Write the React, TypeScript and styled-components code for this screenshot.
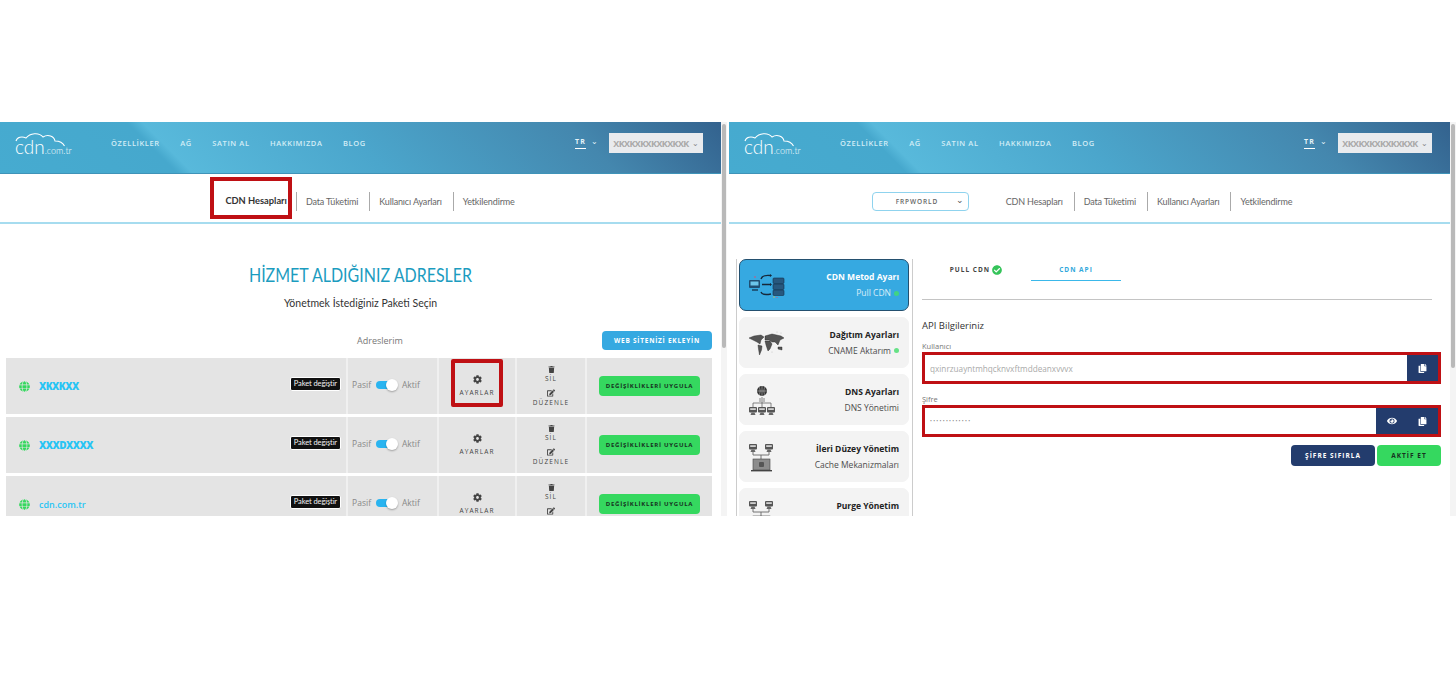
import React from 'react';
import styled, { createGlobalStyle } from 'styled-components';
import { FaCheckCircle, FaCog, FaCopy, FaEdit, FaEye, FaGlobe, FaTrash } from 'react-icons/fa';

const BLUE = '#36a9e1';
const GREEN = '#35d85f';
const NAVY = '#233c6d';
const RED = '#bf1014';
const CELL = '#e4e4e4';

const GlobalStyle = createGlobalStyle`
  html, body {
    margin: 0;
    background: #fff;
    font-family: "Open Sans", "Liberation Sans", sans-serif;
    color: #333;
  }
  * { box-sizing: border-box; }
`;

const navLinks = ['ÖZELLİKLER', 'AĞ', 'SATIN AL', 'HAKKIMIZDA', 'BLOG'];

const Logo = () => (
  <LogoWrap>
    <CloudSvg viewBox="0 0 50 14" fill="none" stroke="#fff" strokeWidth="1.1">
      <path d="M1 8 C2 4 7 3 11 5 C15 0 24 -1 28 4 C33 1 39 3 40 8 C44 8 48 10 49.5 13" />
    </CloudSvg>
    <LogoCdn>cdn</LogoCdn>
    <LogoTld>.com.tr</LogoTld>
  </LogoWrap>
);

const Header = ({ user }: { user: string }) => (
  <HeaderBar>
    <Logo />
    <NavList>
      {navLinks.map((link) => <NavLink key={link}>{link}</NavLink>)}
    </NavList>
    <LangSwitch>
      <LangCode>TR</LangCode>
      <Caret>⌄</Caret>
    </LangSwitch>
    <UserButton>
      <UserName>{user}</UserName>
      <Caret>⌄</Caret>
    </UserButton>
  </HeaderBar>
);

const tabs = ['CDN Hesapları', 'Data Tüketimi', 'Kullanıcı Ayarları', 'Yetkilendirme'];

const Tabs = ({ marked }: { marked?: boolean }) => (
  <TabList>
    {tabs.map((tab, i) => (
      <TabItem key={tab} $first={i === 0} $marked={marked && i === 0}>{tab}</TabItem>
    ))}
  </TabList>
);

const rows = [
  { name: 'XKXKXX', masked: true, marked: true },
  { name: 'XXXDXXXX', masked: true },
  { name: 'cdn.com.tr', masked: false },
];

const SiteRow = ({ name, masked, marked }: { name: string; masked: boolean; marked?: boolean }) => (
  <Row>
    <MainCell>
      <GlobeIcon />
      <SiteName $masked={masked}>{name}</SiteName>
      <PlanBadge>Paket değiştir</PlanBadge>
    </MainCell>
    <ToggleCell>
      <ToggleLabel>Pasif</ToggleLabel>
      <Toggle><ToggleKnob /></Toggle>
      <ToggleLabel>Aktif</ToggleLabel>
    </ToggleCell>
    <SettingsCell>
      <SettingsBox $marked={marked}>
        <FaCog size={9} color="#444" />
        <CellCaption>AYARLAR</CellCaption>
      </SettingsBox>
    </SettingsCell>
    <ActionsCell>
      <FaTrash size={7} color="#444" />
      <CellCaption>SİL</CellCaption>
      <ActionGap />
      <FaEdit size={8} color="#444" />
      <CellCaption>DÜZENLE</CellCaption>
    </ActionsCell>
    <ApplyCell>
      <ApplyButton>DEĞİŞİKLİKLERİ UYGULA</ApplyButton>
    </ApplyCell>
  </Row>
);

const Monitor = ({ x, y }: { x: number; y: number }) => (
  <g>
    <rect x={x} y={y} width="8" height="5.5" rx="1" fill="#555" />
    <rect x={x + 1.2} y={y + 1.2} width="5.6" height="1.8" fill="#cfcfcf" />
    <path d={`M${x + 2.5} ${y + 5.5} h3 l1 2.5 h-5 z`} fill="#666" />
  </g>
);

const MethodArt = () => (
  <ArtSvg viewBox="0 0 38 26" fill="none">
    <rect x="1" y="8" width="11" height="8" rx="1" fill="#1f4f73" />
    <rect x="2.5" y="9.5" width="8" height="4" fill="#6cc6ea" />
    <path d="M4 18 h6" stroke="#173a55" strokeWidth="1.4" />
    <rect x="25" y="6" width="11" height="5.5" rx="1" fill="#27587e" stroke="#143049" strokeWidth=".6" />
    <rect x="25" y="12" width="11" height="5.5" rx="1" fill="#27587e" stroke="#143049" strokeWidth=".6" />
    <rect x="25" y="18" width="11" height="5.5" rx="1" fill="#27587e" stroke="#143049" strokeWidth=".6" />
    <path d="M13 7 C14 4 17 3 22 3.5 M14 12.5 H23 M13 20 C14 23 18 23 23 22" stroke="#17283a" strokeWidth="1.4" />
    <path d="M22 2 l2 1.5 -2 1.5 z M22 11 l2 1.5 -2 1.5 z" fill="#17283a" />
    <circle cx="7" cy="5" r=".8" fill="#e6476f" />
    <circle cx="29" cy="26" r=".8" fill="#e6476f" />
    <circle cx="26" cy="25" r=".7" fill="#e6c347" />
  </ArtSvg>
);

const WorldArt = () => (
  <ArtSvg viewBox="0 0 38 26" fill="#555" stroke="#222" strokeWidth=".4">
    <path d="M1 8 L6 6 L13 5 L16 7 L13 10 L12 14 L9 12 L5 10 Z" />
    <path d="M10 15 L14 16 L13.5 20 L11.5 25 L10.5 19 Z" />
    <path d="M17 6 L24 4 L33 6 L36 8 L32 10 L30 15 L27 12 L24 12 L21 10 L17 10 Z" />
    <path d="M17 11 L22 11 L24 14 L22 19 L20 21 L18 15 Z" />
    <path d="M30 17 L34 17 L34 20 L30 19 Z" />
    <circle cx="29" cy="2" r=".5" fill="#bbb" stroke="none" />
    <circle cx="33" cy="3" r=".5" fill="#bbb" stroke="none" />
    <circle cx="24" cy="22" r=".5" fill="#bbb" stroke="none" />
  </ArtSvg>
);

const DnsArt = () => (
  <ArtSvg viewBox="0 0 38 32" fill="none">
    <circle cx="14" cy="7" r="5" fill="#333" />
    <path d="M9 7 H19 M14 2 V12 M11 3 C12.5 5 12.5 9 11 11 M17 3 C15.5 5 15.5 9 17 11" stroke="#ccc" strokeWidth=".5" />
    <path d="M14 13 V23 M5 23 V19 H23 V23 M12 14 V18 M16 14 V18" stroke="#666" strokeWidth=".8" />
    <Monitor x={1} y={23} />
    <Monitor x={10} y={23} />
    <Monitor x={19} y={23} />
  </ArtSvg>
);

const AdvancedArt = () => (
  <ArtSvg viewBox="0 0 38 32" fill="none">
    <Monitor x={1} y={3} />
    <Monitor x={17} y={3} />
    <path d="M5 11 V14 H21 V11 M13 14 V18" stroke="#666" strokeWidth=".9" />
    <rect x="5" y="18" width="17" height="11" fill="#8c8c8c" stroke="#444" strokeWidth=".6" />
    <rect x="3" y="29" width="21" height="1.4" fill="#444" />
    <rect x="11" y="21" width="5" height="5" rx="1" fill="#555" />
  </ArtSvg>
);

const menu = [
  { title: 'CDN Metod Ayarı', sub: 'Pull CDN', dot: true, active: true, art: <MethodArt /> },
  { title: 'Dağıtım Ayarları', sub: 'CNAME Aktarım', dot: true, art: <WorldArt /> },
  { title: 'DNS Ayarları', sub: 'DNS Yönetimi', art: <DnsArt /> },
  { title: 'İleri Düzey Yönetim', sub: 'Cache Mekanizmaları', art: <AdvancedArt /> },
  { title: 'Purge Yönetim', sub: '\u00a0', art: <AdvancedArt /> },
];

const App = () => (
  <Page>
    <GlobalStyle />
    <Panel>
      <Frame>
        <Header user="XKXKXKXKXKXKXK" />
        <SubNav>
          <Tabs marked />
        </SubNav>
        <Heading>HİZMET ALDIĞINIZ ADRESLER</Heading>
        <Subheading>Yönetmek İstediğiniz Paketi Seçin</Subheading>
        <ListBar>
          <ListLabel>Adreslerim</ListLabel>
          <AddButton>WEB SİTENİZİ EKLEYİN</AddButton>
        </ListBar>
        <RowList>
          {rows.map((row) => <SiteRow key={row.name} {...row} />)}
        </RowList>
      </Frame>
      <Scrollbar><Thumb $height={224} /></Scrollbar>
    </Panel>

    <Panel>
      <Frame>
        <Header user="XKXKXKXKXKXKXK" />
        <SubNav>
          <AccountSelect><AccountName>FRPWORLD</AccountName><SelectCaret>⌄</SelectCaret></AccountSelect>
          <Tabs />
        </SubNav>
        <Settings>
          <Sidebar>
            {menu.map((item) => (
              <MenuCard key={item.title} $active={item.active}>
                <MenuArt>{item.art}</MenuArt>
                <MenuText>
                  <MenuTitle>{item.title}</MenuTitle>
                  <MenuSub>{item.sub}{item.dot && <StatusDot />}</MenuSub>
                </MenuText>
              </MenuCard>
            ))}
          </Sidebar>
          <Content>
            <MethodTabs>
              <MethodTab>PULL CDN <FaCheckCircle size={10} color="#35c45a" /></MethodTab>
              <MethodTab $active>CDN API</MethodTab>
            </MethodTabs>
            <SectionTitle>API Bilgileriniz</SectionTitle>
            <FieldLabel>Kullanıcı</FieldLabel>
            <FieldBox>
              <FieldValue>qxinrzuayntmhqcknvxftmddeanxvvvx</FieldValue>
              <FieldAction><FaCopy size={9} /></FieldAction>
            </FieldBox>
            <FieldLabel>Şifre</FieldLabel>
            <FieldBox>
              <FieldValue $secret>•••••••••••••</FieldValue>
              <FieldAction><FaEye size={10} /></FieldAction>
              <FieldAction><FaCopy size={9} /></FieldAction>
            </FieldBox>
            <FormActions>
              <FormButton $color={NAVY} $width={84} $text="#fff">ŞİFRE SIFIRLA</FormButton>
              <FormButton $color={GREEN} $width={64} $text="#17321f">AKTİF ET</FormButton>
            </FormActions>
          </Content>
        </Settings>
      </Frame>
      <Scrollbar><Thumb $height={244} /></Scrollbar>
    </Panel>
  </Page>
);

export default App;

const Page = styled.div`
  display: grid;
  grid-template-columns: 727px 727px;
  column-gap: 2px;
  padding-top: 122px;
  width: 1456px;
  height: 689px;
  overflow: hidden;
`;

const Panel = styled.section`
  display: flex;
  height: 394px;
  overflow: hidden;
`;

const Frame = styled.div`
  flex: 0 0 721px;
  height: 394px;
  overflow: hidden;
`;

const Scrollbar = styled.div`
  flex: 1;
  background: #f4f4f4;
  padding: 2px 1px 0;
`;

const Thumb = styled.div<{ $height: number }>`
  height: ${(p) => p.$height}px;
  border-radius: 3px;
  background: #b9b9b9;
`;

const HeaderBar = styled.header`
  display: flex;
  align-items: center;
  height: 52px;
  padding: 0 18px 9px 15px;
  background: linear-gradient(45deg, #46abd0 0%, #46a8cd 23%, #58b9db 25%, #4ba6cc 50%, #4487ae 80%, #33628e 100%);
  border-bottom: 1px solid #3f93b8;
`;

const LogoWrap = styled.div`
  position: relative;
  display: flex;
  align-items: baseline;
  width: 96px;
  padding-top: 8px;
  color: #fff;
`;

const CloudSvg = styled.svg`
  position: absolute;
  top: 3px;
  left: 0;
  width: 50px;
  height: 14px;
`;

const LogoCdn = styled.span`
  font: 300 19px/18px Lato, sans-serif;
`;

const LogoTld = styled.span`
  font: 300 9px/12px Lato, sans-serif;
`;

const NavList = styled.nav`
  display: flex;
  flex: 1;
  gap: 20.5px;
`;

const NavLink = styled.span`
  font-size: 7.5px;
  font-weight: 600;
  letter-spacing: 0.6px;
  color: #d3edf6;
`;

const LangSwitch = styled.div`
  display: flex;
  align-items: flex-start;
  gap: 5px;
  margin-right: 11px;
  color: #e6f3f8;
`;

const LangCode = styled.span`
  padding-bottom: 2px;
  border-bottom: 1px solid #fff;
  font-size: 7px;
  font-weight: 700;
  letter-spacing: 1.2px;
`;

const Caret = styled.span`
  font-size: 8px;
  line-height: 8px;
`;

const UserButton = styled.div`
  display: flex;
  align-items: center;
  justify-content: center;
  gap: 3px;
  width: 94px;
  height: 20px;
  background: #e9ebee;
  color: #888;
`;

const UserName = styled.span`
  font-size: 9px;
  font-weight: 700;
  letter-spacing: -0.6px;
  color: #a9a9a9;
`;

const SubNav = styled.div`
  display: flex;
  align-items: center;
  justify-content: center;
  gap: 28px;
  height: 50px;
  padding: 6px 4px 0 0;
  border-bottom: 2px solid #a6dcef;
`;

const TabList = styled.div`
  display: flex;
  align-items: center;
`;

const TabItem = styled.div<{ $first: boolean; $marked?: boolean }>`
  display: flex;
  align-items: center;
  height: 19px;
  padding: 0 11px 0 9px;
  border-left: ${(p) => (p.$first ? 'none' : '1px solid #aaa')};
  font: ${(p) => (p.$marked ? 700 : 400)} ${(p) => (p.$marked ? '9.3px' : '9px')} Lato, sans-serif;
  letter-spacing: ${(p) => (p.$marked ? 0 : '-0.15px')};
  color: ${(p) => (p.$marked ? '#333' : '#666')};
  white-space: nowrap;
  ${(p) => p.$marked && `
    height: 42px;
    margin: -6px 4px 0 19px;
    padding: 4px 1px 0 11px;
    border: 4px solid ${RED};
  `}
`;

const Heading = styled.h1`
  margin: 38px 0 0;
  font: 400 20px/24px Lato, sans-serif;
  text-align: center;
  color: #1c9cbf;
  transform: scaleX(0.8);
`;

const Subheading = styled.p`
  margin: 9px 0 0;
  font: 400 10.5px/16px Lato, sans-serif;
  text-align: center;
  color: #333;
`;

const ListBar = styled.div`
  display: flex;
  align-items: center;
  justify-content: space-between;
  height: 20px;
  margin: 19px 9px 8px 357px;
`;

const ListLabel = styled.span`
  font-size: 9px;
  color: #777;
`;

const AddButton = styled.button`
  width: 110px;
  height: 19px;
  padding: 0;
  border: 0;
  border-radius: 4px;
  background: ${BLUE};
  color: #fff;
  font: 700 6.5px "Open Sans", sans-serif;
  letter-spacing: 0.75px;
`;

const RowList = styled.div`
  display: flex;
  flex-direction: column;
  gap: 3px;
  width: 706px;
  margin-left: 6px;
`;

const Row = styled.div`
  display: grid;
  grid-template-columns: 340px 89px 76px 68px 125px;
  column-gap: 2px;
  height: 56px;
  background: #f0f0f0;
`;

const MainCell = styled.div`
  display: flex;
  align-items: center;
  padding: 0 5px 0 13px;
  background: ${CELL};
`;

const GlobeIcon = styled(FaGlobe)`
  flex: none;
  width: 11px;
  height: 11px;
  color: #35d85f;
`;

const SiteName = styled.span<{ $masked: boolean }>`
  flex: 1;
  margin-left: 9px;
  font-size: ${(p) => (p.$masked ? '10px' : '9px')};
  font-weight: ${(p) => (p.$masked ? 800 : 600)};
  letter-spacing: ${(p) => (p.$masked ? '-0.5px' : 0)};
  color: #28c4f4;
`;

const PlanBadge = styled.span`
  padding: 1px 3px;
  border: 1px solid #fff;
  border-radius: 2px;
  background: #111;
  color: #f2f2f2;
  font: 400 7.5px/10px Lato, sans-serif;
  letter-spacing: -0.1px;
  transform: translateY(-2px);
`;

const ToggleCell = styled.div`
  display: flex;
  align-items: center;
  justify-content: center;
  gap: 4px;
  padding: 0 13px 3px 0;
  background: ${CELL};
`;

const ToggleLabel = styled.span`
  font-size: 8.5px;
  color: #888;
`;

const Toggle = styled.span`
  position: relative;
  width: 20px;
  height: 8px;
  margin: 0 2px 0 1px;
  border-radius: 4px;
  background: #29b4f0;
`;

const ToggleKnob = styled.span`
  position: absolute;
  top: -2px;
  right: -2px;
  width: 12px;
  height: 12px;
  border-radius: 50%;
  background: #fff;
  box-shadow: 0 1px 2px rgba(0, 0, 0, 0.3);
`;

const SettingsCell = styled.div`
  display: flex;
  justify-content: center;
  padding-top: 1px;
  background: ${CELL};
`;

const SettingsBox = styled.div<{ $marked?: boolean }>`
  display: flex;
  flex-direction: column;
  align-items: center;
  justify-content: center;
  gap: 4px;
  width: 52px;
  height: 48px;
  padding-top: 6px;
  border: 4px solid ${(p) => (p.$marked ? RED : 'transparent')};
  border-radius: 2px;
`;

const CellCaption = styled.span`
  font-size: 6.5px;
  font-weight: 500;
  letter-spacing: 1.1px;
  line-height: 9px;
  color: #444;
`;

const ActionsCell = styled.div`
  display: flex;
  flex-direction: column;
  align-items: center;
  padding-top: 8px;
  gap: 1px;
  background: ${CELL};
`;

const ActionGap = styled.div`
  height: 4px;
`;

const ApplyCell = styled.div`
  display: flex;
  align-items: center;
  justify-content: center;
  background: ${CELL};
`;

const ApplyButton = styled.button`
  width: 101px;
  height: 20px;
  padding: 0;
  border: 0;
  border-radius: 4px;
  background: ${GREEN};
  color: #17321f;
  font: 700 6px "Open Sans", sans-serif;
  letter-spacing: 0.75px;
  white-space: nowrap;
`;

const AccountSelect = styled.div`
  display: flex;
  align-items: center;
  justify-content: space-between;
  width: 97px;
  height: 19px;
  padding: 0 4px 0 23px;
  border: 1px solid #8fd3ee;
  border-radius: 4px;
`;

const AccountName = styled.span`
  font-size: 6.5px;
  font-weight: 600;
  letter-spacing: 0.9px;
  color: #666;
`;

const SelectCaret = styled.span`
  font-size: 9px;
  line-height: 9px;
  margin-top: -4px;
  color: #555;
`;

const Settings = styled.div`
  display: flex;
  padding: 35px 0 0 7px;
`;

const Sidebar = styled.aside`
  display: flex;
  flex: 0 0 177px;
  flex-direction: column;
  gap: 6px;
  padding: 0 3px 0 2px;
  border-left: 1px solid #ccc;
  border-right: 1px solid #ccc;
`;

const MenuCard = styled.div<{ $active?: boolean }>`
  display: flex;
  flex: none;
  align-items: center;
  justify-content: space-between;
  height: ${(p) => (p.$active ? 52 : 51)}px;
  padding: 0 9px 0 8px;
  border: 1px solid ${(p) => (p.$active ? '#24506f' : '#f3f3f3')};
  border-radius: 7px;
  background: ${(p) => (p.$active ? BLUE : '#f3f3f3')};
  color: ${(p) => (p.$active ? '#fff' : '#222')};
`;

const MenuArt = styled.div`
  flex: none;
  width: 38px;
`;

const ArtSvg = styled.svg`
  display: block;
  width: 38px;
`;

const MenuText = styled.div`
  display: flex;
  flex-direction: column;
  align-items: flex-end;
  gap: 4px;
`;

const MenuTitle = styled.span`
  font-size: 8.5px;
  font-weight: 700;
  line-height: 12px;
`;

const MenuSub = styled.span`
  display: flex;
  align-items: center;
  gap: 3px;
  font-size: 8.5px;
  line-height: 12px;
  opacity: 0.8;
`;

const StatusDot = styled.i`
  width: 5px;
  height: 5px;
  border-radius: 50%;
  background: #44de6c;
`;

const Content = styled.div`
  flex: 0 0 519px;
  margin-left: 9px;
`;

const MethodTabs = styled.div`
  display: grid;
  grid-template-columns: 109px 90px;
  height: 31px;
  width: 510px;
  box-sizing: content-box;
  padding-bottom: 9px;
  border-bottom: 1px solid #c4c4c4;
`;

const MethodTab = styled.div<{ $active?: boolean }>`
  display: flex;
  align-items: center;
  justify-content: ${(p) => (p.$active ? 'center' : 'flex-end')};
  gap: 2px;
  height: 22px;
  padding-right: ${(p) => (p.$active ? 0 : '29px')};
  border-bottom: 1px solid ${(p) => (p.$active ? '#3ab8ea' : 'transparent')};
  font-size: 6.5px;
  font-weight: 700;
  letter-spacing: 1px;
  color: ${(p) => (p.$active ? '#30a8dc' : '#444')};
`;

const SectionTitle = styled.h3`
  margin: 19px 0 7px;
  font-size: 9.5px;
  font-weight: 400;
  line-height: 14px;
  color: #333;
`;

const FieldLabel = styled.label`
  display: block;
  font-size: 7.5px;
  line-height: 12px;
  color: #777;
`;

const FieldBox = styled.div`
  display: flex;
  height: 32px;
  margin-bottom: 9px;
  border: 3px solid ${RED};
`;

const FieldValue = styled.div<{ $secret?: boolean }>`
  display: flex;
  flex: 1;
  align-items: center;
  padding-left: 5px;
  border-radius: 3px 0 0 3px;
  background: #fff;
  font-size: ${(p) => (p.$secret ? '5px' : '8.2px')};
  letter-spacing: ${(p) => (p.$secret ? '1.3px' : '0')};
  color: ${(p) => (p.$secret ? '#888' : '#aaa')};
`;

const FieldAction = styled.div`
  display: flex;
  align-items: center;
  justify-content: center;
  width: 31px;
  background: ${NAVY};
  color: #fff;
`;

const FormActions = styled.div`
  display: flex;
  justify-content: flex-end;
  gap: 2px;
  margin-top: -1px;
`;

const FormButton = styled.button<{ $color: string; $width: number; $text: string }>`
  width: ${(p) => p.$width}px;
  height: 21px;
  padding: 0;
  border: 0;
  border-radius: 4px;
  background: ${(p) => p.$color};
  color: ${(p) => p.$text};
  font: 700 6.5px "Open Sans", sans-serif;
  letter-spacing: 1px;
`;
